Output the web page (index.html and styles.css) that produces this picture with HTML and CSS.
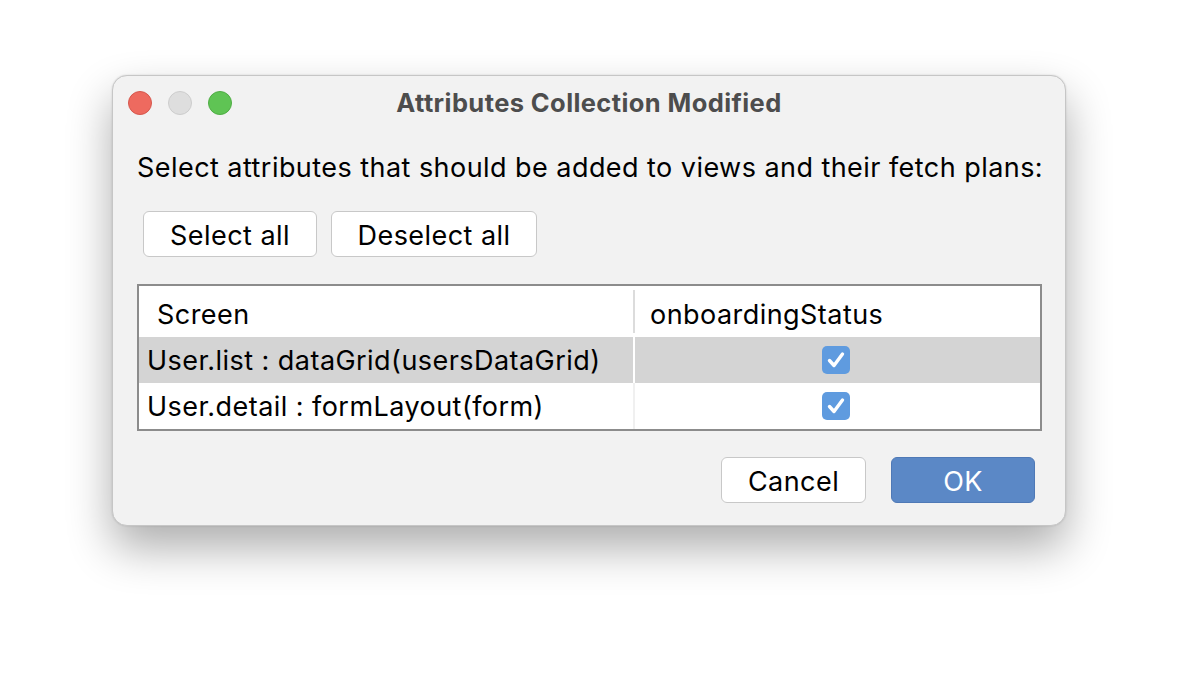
FILE: index.html
```html
<!DOCTYPE html>
<html>
<head>
<meta charset="utf-8">
<link rel="stylesheet" href="styles.css">
</head>
<body>
<div class="window">
  <div class="titlebar">
    <div class="lights">
      <span class="light red"></span>
      <span class="light gray"></span>
      <span class="light green"></span>
    </div>
    <div class="title">Attributes Collection Modified</div>
  </div>
  <div class="content">
    <div class="label">Select attributes that should be added to views and their fetch plans:</div>
    <div class="toprow">
      <button class="btn sel">Select all</button>
      <button class="btn desel">Deselect all</button>
    </div>
    <div class="table">
      <div class="row head">
        <div class="cell c1">Screen</div>
        <div class="cell c2">onboardingStatus</div>
      </div>
      <div class="row selected">
        <div class="cell c1">User.list : dataGrid(usersDataGrid)</div>
        <div class="cell c2 center"><span class="check"><svg viewBox="0 0 28 28" width="28" height="28"><path d="M7.5 14.5 L12 19.5 L20.5 8" fill="none" stroke="#fff" stroke-width="3.4" stroke-linecap="round" stroke-linejoin="round"/></svg></span></div>
      </div>
      <div class="row">
        <div class="cell c1">User.detail : formLayout(form)</div>
        <div class="cell c2 center"><span class="check"><svg viewBox="0 0 28 28" width="28" height="28"><path d="M7.5 14.5 L12 19.5 L20.5 8" fill="none" stroke="#fff" stroke-width="3.4" stroke-linecap="round" stroke-linejoin="round"/></svg></span></div>
      </div>
    </div>
    <div class="bottomrow">
      <button class="btn cancel">Cancel</button>
      <button class="btn ok">OK</button>
    </div>
  </div>
</div>
</body>
</html>
```

FILE: styles.css
```css
html, body {
  margin: 0;
  padding: 0;
  background: #ffffff;
}
body {
  width: 1178px;
  height: 674px;
  overflow: hidden;
  font-family: Inter, "Liberation Sans", sans-serif;
  color: #000;
}
.window {
  margin-left: 112px;
  margin-top: 75px;
  width: 954px;
  height: 451px;
  box-sizing: border-box;
  background: #f2f2f2;
  border: 1px solid #c6c6c6;
  border-radius: 15px;
  box-shadow: 0 22px 45px rgba(0,0,0,0.32), 0 0 2px rgba(0,0,0,0.15);
  display: flex;
  flex-direction: column;
}
.titlebar {
  height: 55px;
  position: relative;
  display: flex;
  align-items: center;
  justify-content: center;
}
.lights {
  position: absolute;
  left: 15px;
  top: 15px;
  display: flex;
  gap: 16px;
}
.light {
  width: 24px;
  height: 24px;
  border-radius: 50%;
  box-sizing: border-box;
}
.light.red { background: #ee6a5f; border: 1px solid #d6574d; }
.light.gray { background: #dedede; border: 1px solid #cdcdcd; }
.light.green { background: #5fc454; border: 1px solid #4fad44; }
.title {
  font-weight: 700;
  font-size: 25.5px;
  letter-spacing: 0.4px;
  color: #4d4d4d;
  margin-top: -3px;
}
.content {
  padding: 0 24px 0 24px;
  display: flex;
  flex-direction: column;
}
.label {
  font-size: 27px;
  letter-spacing: 0.45px;
  line-height: 32px;
  margin-top: 21px;
  white-space: nowrap;
}
.toprow {
  display: flex;
  gap: 14px;
  margin-top: 27px;
  padding-left: 6px;
}
.btn {
  font-family: Inter, "Liberation Sans", sans-serif;
  font-size: 27px;
  letter-spacing: 0.45px;
  height: 46px;
  box-sizing: border-box;
  background: #ffffff;
  border: 1.5px solid #c8c8c8;
  border-radius: 6px;
  color: #000;
  padding: 4px 0 0 0;
  line-height: 38px;
}
.btn.sel { width: 174px; }
.btn.desel { width: 206px; }
.table {
  margin-top: 27px;
  width: 905px;
  box-sizing: border-box;
  border: 2px solid #8c8c8c;
  background: #ffffff;
}
.row {
  display: flex;
  height: 46px;
  font-size: 27px;
  letter-spacing: 0.45px;
  align-items: center;
}
.row.head {
  height: 51px;
}
.row.head .cell {
  padding-top: 5px;
}
.row.selected {
  background: #d4d4d4;
}
.cell {
  box-sizing: border-box;
  height: 100%;
  display: flex;
  align-items: center;
  white-space: nowrap;
}
.c1 {
  width: 496px;
  padding-left: 8px;
  border-right: 2px solid #f0f0f0;
}
.row.selected .c1 { border-right-color: #ffffff; }
.head .c1 {
  padding-left: 18px;
  border-right: none;
  position: relative;
}
.head .c1::after {
  content: "";
  position: absolute;
  right: 0;
  top: 4px;
  bottom: 4px;
  width: 2px;
  background: #dcdcdc;
}
.c2 {
  flex: 1;
  padding-left: 14px;
}
.c2.center {
  justify-content: center;
  padding-left: 0;
  padding-right: 4px;
}
.head .c2 { padding-left: 15px; }
.check {
  width: 28px;
  height: 28px;
  border-radius: 5px;
  background: #5f9bdf;
  display: block;
}
.check svg { display: block; }
.bottomrow {
  display: flex;
  justify-content: flex-end;
  gap: 25px;
  margin-top: 26px;
  padding-right: 6px;
}
.btn.cancel { width: 145px; }
.btn.ok {
  width: 144px;
  background: #5b88c6;
  border-color: #4f79b6;
  color: #ffffff;
}
```
